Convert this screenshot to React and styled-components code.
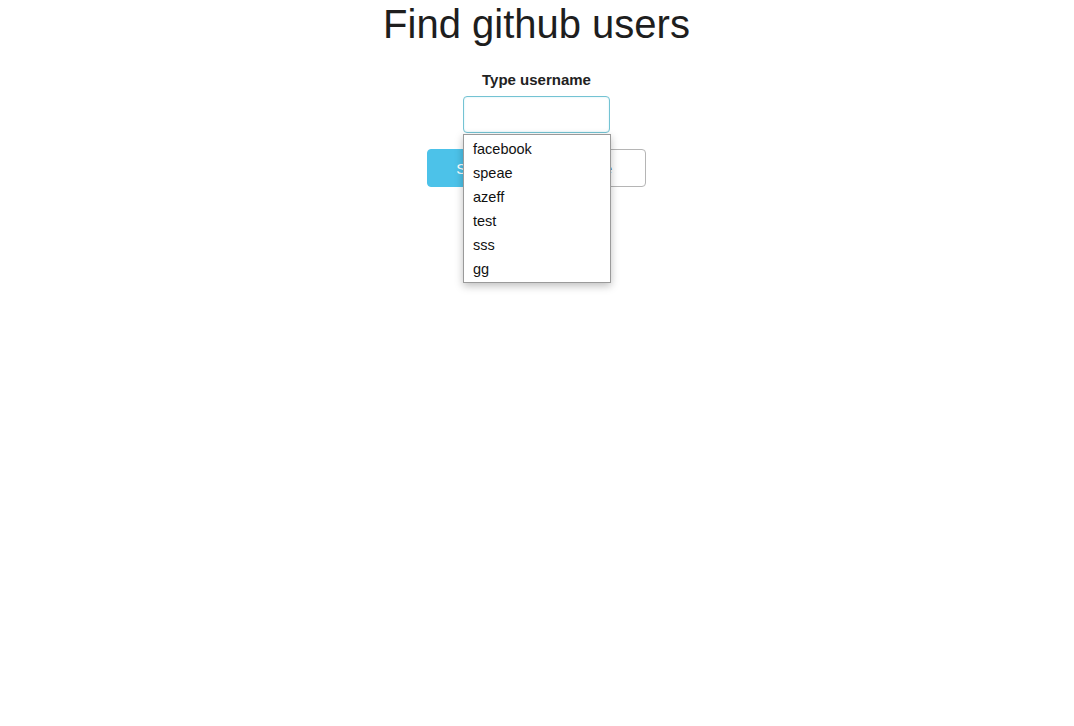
import React, { useState } from 'react';
import styled, { createGlobalStyle } from 'styled-components';

const GlobalStyle = createGlobalStyle`
  html, body {
    margin: 0;
    padding: 0;
    background: #ffffff;
    font-family: "Liberation Sans", Arial, sans-serif;
    color: #222;
  }
`;

const Page = styled.main`
  display: flex;
  flex-direction: column;
  align-items: center;
  min-height: 726px;
  padding-right: 1px;
`;

const Title = styled.h1`
  margin: 2px 0 0;
  font-size: 40px;
  line-height: 44px;
  font-weight: 400;
  color: #1e1e1e;
`;

const Form = styled.form`
  display: flex;
  flex-direction: column;
  align-items: center;
  margin-top: 24px;
`;

const Label = styled.label`
  font-size: 15px;
  line-height: 20px;
  font-weight: 700;
  color: #222;
`;

const Field = styled.div`
  position: relative;
  margin-top: 6px;
`;

const Input = styled.input`
  box-sizing: border-box;
  width: 147px;
  height: 37px;
  padding: 6px 10px;
  border: 1px solid #74c3d3;
  border-radius: 4px;
  box-shadow: inset 0 0 2px rgba(102, 200, 220, 0.35);
  font: inherit;
  font-size: 15px;
  outline: none;
`;

/* autocomplete list lies over the buttons below */
const Suggestions = styled.ul`
  position: absolute;
  top: 38px;
  left: 0;
  z-index: 5;
  box-sizing: border-box;
  width: 148px;
  margin: 0;
  padding: 2px 0 1px;
  list-style: none;
  background: #fff;
  border: 1px solid #9a9a9a;
  box-shadow: 0 3px 8px rgba(0, 0, 0, 0.25);
`;

const Suggestion = styled.li`
  height: 24px;
  line-height: 24px;
  padding: 0 9px;
  font-size: 14.5px;
  color: #111;
  cursor: pointer;
`;

const Buttons = styled.div`
  display: flex;
  gap: 7px;
  margin-top: 16px;
`;

const Button = styled.button`
  box-sizing: border-box;
  width: 106px;
  height: 38px;
  border-radius: 4px;
  font: inherit;
  font-size: 15px;
  cursor: pointer;
  border: 1px solid ${(p) => (p.$primary ? '#4cc2e9' : '#b5b5b5')};
  background: ${(p) => (p.$primary ? '#4cc2e9' : '#fff')};
  color: ${(p) => (p.$primary ? '#fff' : '#333')};
`;

const users = ['facebook', 'speae', 'azeff', 'test', 'sss', 'gg'];

const App = () => {
  const [name, setName] = useState('');

  return (
    <Page>
      <GlobalStyle />
      <Title>Find github users</Title>
      <Form onSubmit={(e) => e.preventDefault()}>
        <Label htmlFor="username">Type username</Label>
        <Field>
          <Input id="username" value={name} onChange={(e) => setName(e.target.value)} />
          <Suggestions>
            {users.map((u) => (
              <Suggestion key={u} onClick={() => setName(u)}>{u}</Suggestion>
            ))}
          </Suggestions>
        </Field>
        <Buttons>
          <Button $primary type="submit">Search</Button>
          <Button type="button">Close</Button>
        </Buttons>
      </Form>
    </Page>
  );
};

export default App;
